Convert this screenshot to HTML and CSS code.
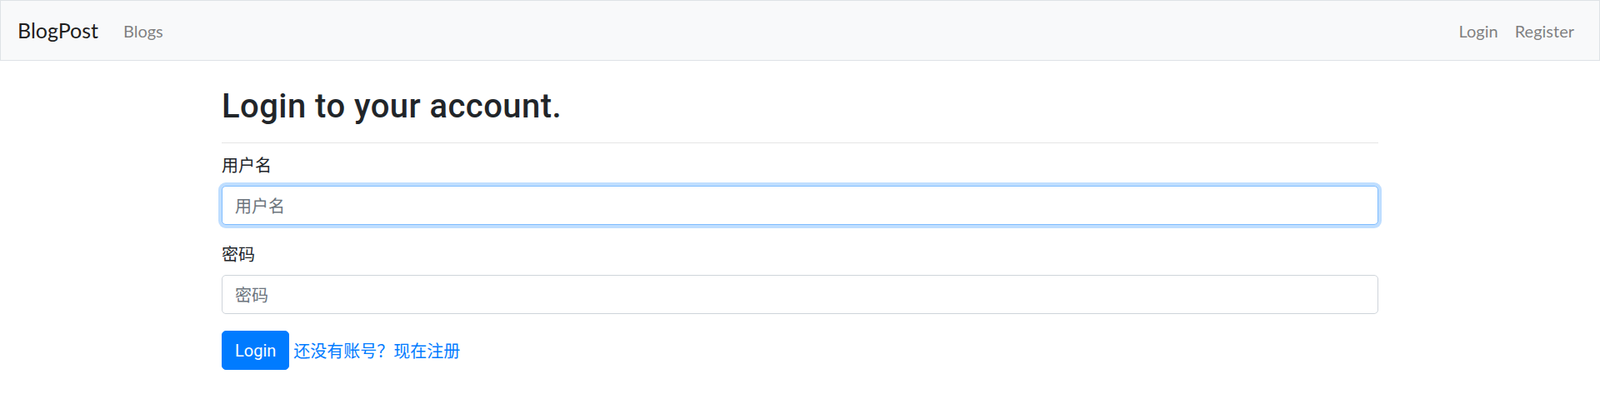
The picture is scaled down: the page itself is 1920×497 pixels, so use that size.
FILE: index.html
```html
<!DOCTYPE html>
<html lang="zh">
<head>
<meta charset="utf-8">
<title>BlogPost - Login</title>
<link rel="stylesheet" href="styles.css">
</head>
<body>
<nav class="navbar">
  <a class="brand" href="#">BlogPost</a>
  <ul class="nav nav-left">
    <li><a class="nav-link" href="#">Blogs</a></li>
  </ul>
  <ul class="nav nav-right">
    <li><a class="nav-link" href="#">Login</a></li>
    <li><a class="nav-link" href="#">Register</a></li>
  </ul>
</nav>
<main class="container">
  <h2 class="title">Login to your account.</h2>
  <hr class="divider">
  <form class="form">
    <div class="form-group">
      <label class="label" for="username">用户名</label>
      <input class="input input-focus" id="username" type="text" placeholder="用户名" autofocus>
    </div>
    <div class="form-group">
      <label class="label" for="password">密码</label>
      <input class="input" id="password" type="password" placeholder="密码">
    </div>
    <div class="actions">
      <button class="btn" type="button">Login</button>
      <a class="register-link" href="#">还没有账号？现在注册</a>
    </div>
  </form>
</main>
</body>
</html>
```
FILE: styles.css
```css
* { box-sizing: border-box; }
html, body { margin: 0; padding: 0; }
body {
  font-family: Roboto, "Noto Sans CJK SC", sans-serif;
  font-size: 20px;
  line-height: 1.5;
  color: #212529;
  background: #fff;
}
a { text-decoration: none; }

.navbar {
  display: flex;
  align-items: center;
  height: 73px;
  padding: 0 20px;
  background: #f8f9fa;
  border: 1px solid #dee2e6;
}
.brand {
  font-family: Lato, sans-serif;
  font-size: 25px;
  line-height: 1.5;
  color: rgba(0,0,0,.9);
  margin-right: 20px;
}
.nav {
  display: flex;
  list-style: none;
  margin: 0;
  padding: 0;
}
.nav-right { margin-left: auto; }
.nav-link {
  display: block;
  padding: 10px 10px;
  font-family: Lato, sans-serif;
  color: rgba(0,0,0,.5);
}

.container {
  width: 1388px;
  margin: 0 auto;
  padding-top: 31px;
}
.title {
  margin: 0;
  font-family: Roboto, sans-serif;
  font-size: 40px;
  font-weight: 500;
  line-height: 48px;
  letter-spacing: 0.45px;
}
.divider {
  margin: 19px 0 11px;
  border: 0;
  border-top: 1px solid rgba(0,0,0,.1);
  height: 0;
}
.form-group { margin-bottom: 20px; }
.label {
  display: block;
  margin-bottom: 10px;
  font-family: "Noto Sans CJK SC", sans-serif;
  line-height: 30px;
}
.input {
  display: block;
  width: 100%;
  height: 47px;
  padding: 7px 15px;
  font-size: 20px;
  font-family: "Noto Sans CJK SC", sans-serif;
  line-height: 1.5;
  color: #495057;
  background: #fff;
  border: 1px solid #ced4da;
  border-radius: 5px;
  outline: none;
}
.input::placeholder { color: #6c757d; opacity: 1; }
.input-focus, .input:focus {
  border-color: #80bdff;
  box-shadow: 0 0 0 4px rgba(0,123,255,.25);
}
.actions {
  display: flex;
  align-items: center;
  gap: 5px;
}
.btn {
  height: 47px;
  padding: 7px 15px;
  font-family: Roboto, sans-serif;
  font-size: 20px;
  line-height: 1.5;
  color: #fff;
  background: #007bff;
  border: 1px solid #007bff;
  border-radius: 5px;
}
.register-link {
  color: #007bff;
  font-family: "Noto Sans CJK SC", sans-serif;
  line-height: 30px;
}
```
